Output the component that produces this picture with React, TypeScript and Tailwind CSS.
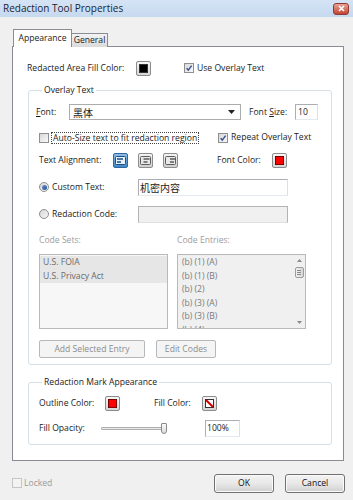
import type { ReactNode } from 'react';

const cjk = "font-['Noto_Sans_CJK_SC',sans-serif]";

function Check({ checked, disabled }: { checked?: boolean; disabled?: boolean }) {
  return (
    <span
      className={`flex h-[10px] w-[10px] shrink-0 items-center justify-center border ${
        disabled ? 'border-[#c6c6c6] bg-[#f3f3f3]' : 'border-[#8e8f8f] bg-gradient-to-br from-[#d8d8d8] to-[#fafafa]'
      }`}
    >
      {checked && (
        <svg width="8" height="8" viewBox="0 0 8 8">
          <path d="M1.6 4.3 L3.3 6.1 L6.6 1.6" fill="none" stroke="#3a4f8a" strokeWidth="1.4" />
        </svg>
      )}
    </span>
  );
}

function Radio({ checked }: { checked?: boolean }) {
  return (
    <span className="flex h-[10px] w-[10px] shrink-0 items-center justify-center rounded-full border border-[#8e8f8f] bg-gradient-to-br from-[#d6d6d6] to-[#f7f7f7]">
      {checked && <span className="h-[5px] w-[5px] rounded-full bg-gradient-to-br from-[#6a93cf] to-[#1f4d94]" />}
    </span>
  );
}

function Swatch({ children }: { children: ReactNode }) {
  return (
    <span className="flex h-[15px] w-[15px] shrink-0 items-center justify-center rounded-[2px] border border-[#8b8b8b] bg-gradient-to-b from-[#f7f7f7] to-[#d6d6d6]">
      {children}
    </span>
  );
}

function AlignButton({ active, kind }: { active?: boolean; kind: 'left' | 'center' | 'right' }) {
  const line = active ? '#1d4f82' : '#5c5c5c';
  const inner = active ? '#e4f1fb' : '#e9e9e9';
  const x = kind === 'left' ? 3.5 : kind === 'center' ? 5 : 6.5;
  return (
    <span
      className={`flex h-[15px] w-[15px] shrink-0 items-center justify-center rounded-[2px] border ${
        active ? 'border-[#2c6aa0] bg-gradient-to-b from-[#8fbce6] to-[#3f86c6]' : 'border-[#8d8d8d] bg-gradient-to-b from-[#f4f4f4] to-[#cfcfcf]'
      }`}
    >
      <svg width="11" height="9" viewBox="0 0 11 9">
        <rect x="0.5" y="0.5" width="10" height="8" rx="1" fill={inner} stroke={line} strokeWidth="1" />
        <path d={`M${x - 1.5} 3 H${x + 4.5} M${x - 1.5} 6 H${x + 2.5}`} stroke={line} strokeWidth="1.3" />
      </svg>
    </span>
  );
}

function WinButton({ children, className = '' }: { children: ReactNode; className?: string }) {
  return (
    <span
      className={`flex h-[19px] items-center justify-center rounded-[3px] border border-[#707070] bg-gradient-to-b from-[#f3f3f3] via-[#e8e8e8] to-[#d0d0d0] text-[#111] shadow-[inset_0_0_0_1px_#fbfbfb] ${className}`}
    >
      {children}
    </span>
  );
}

function DisabledButton({ children, className = '' }: { children: ReactNode; className?: string }) {
  return (
    <span
      className={`flex h-[18px] items-center justify-center rounded-[2px] border border-[#b5b9bc] bg-[#f4f4f4] text-[#8c8c8c] ${className}`}
    >
      {children}
    </span>
  );
}

const entries = ['(b) (1) (A)', '(b) (1) (B)', '(b) (2)', '(b) (3) (A)', '(b) (3) (B)', '(b) (4)'];

export default function App() {
  return (
    <div className="flex h-[500px] w-[353px] flex-col overflow-hidden bg-[#f0f0f0] font-['Open_Sans',sans-serif] text-[8.6px] text-[#1b1b1b]">
      {/* title bar */}
      <div className="flex h-[17px] shrink-0 items-center justify-between bg-gradient-to-b from-[#d5e4f5] to-[#c6d9ef] pl-[3px] pr-[4px]">
        <span className="text-[10px] text-[#1a2431]">Redaction Tool Properties</span>
        <span className="flex h-[12px] w-[16px] items-center justify-center rounded-[3px] border border-[#8e3b31] bg-gradient-to-b from-[#e9a195] to-[#c3412f]">
          <svg width="7" height="7" viewBox="0 0 7 7">
            <path d="M1 1 L6 6 M6 1 L1 6" stroke="#fff" strokeWidth="1.6" />
          </svg>
        </span>
      </div>

      <div className="pl-[12px] pt-[12px]">
        {/* tabs */}
        <div className="relative z-10 -mb-px flex h-[18px] items-end">
          <span className="ml-[1px] flex h-[18px] w-[59px] items-center justify-center border border-b-0 border-[#898c95] bg-white">
            Appearance
          </span>
          <span className="flex h-[14px] w-[36px] items-center justify-center border border-b-0 border-l-0 border-[#898c95] bg-gradient-to-b from-[#f3f3f3] to-[#dadada]">
            General
          </span>
        </div>

        {/* panel */}
        <div className="h-[415px] w-[332px] border border-[#898c95] bg-white pl-[14px] pt-[14px]">
          <div className="flex h-[15px] items-center">
            <span className="w-[109px]">Redacted Area Fill Color:</span>
            <Swatch>
              <span className="h-[9px] w-[9px] border border-[#333] bg-black" />
            </Swatch>
            <span className="ml-[33px] flex items-center gap-[3px]">
              <Check checked />
              Use Overlay Text
            </span>
          </div>

          <fieldset className="ml-[1px] mt-[8px] w-[304px] rounded-[3px] border border-[#d5dfe5] pb-[6px] pl-[10px]">
            <legend className="ml-[3px] px-[2px] leading-[12px]">Overlay Text</legend>

            <div className="-ml-[3px] mt-[8px] flex h-[16px] items-center">
              <span className="w-[33px]">
                <span className="underline">F</span>ont:
              </span>
              <span className="flex h-[16px] w-[172px] items-center justify-between border border-[#acacac] bg-white pl-[3px] pr-[5px]">
                <span className={`${cjk} text-[10px]`}>黑体</span>
                <svg width="7" height="4" viewBox="0 0 7 4">
                  <path d="M0 0 H7 L3.5 4 Z" fill="#222" />
                </svg>
              </span>
              <span className="ml-[8px] w-[46px]">
                Font <span className="underline">S</span>ize:
              </span>
              <span className="flex h-[16px] w-[23px] items-center border border-[#abadb3] border-b-[#e3e9ef] border-r-[#dbdfe6] bg-white pl-[2px]">
                10
              </span>
            </div>

            <div className="mt-[12px] flex h-[11px] items-center">
              <span className="flex w-[179px] items-center">
                <Check />
                <span className="ml-[2px] border border-dotted border-[#444] px-[1px] leading-[10px]">
                  Auto-Size text to fit redaction region
                </span>
              </span>
              <Check checked />
              <span className="ml-[3px]">Repeat Overlay Text</span>
            </div>

            <div className="mt-[10px] flex h-[15px] items-center">
              <span className="w-[74px]">Text Alignment:</span>
              <span className="flex gap-[10px]">
                <AlignButton active kind="left" />
                <AlignButton kind="center" />
                <AlignButton kind="right" />
              </span>
              <span className="ml-[39px] w-[55px]">Font Color:</span>
              <Swatch>
                <span className="h-[9px] w-[9px] border border-[#7a0000] bg-[#ff0000]" />
              </Swatch>
            </div>

            <div className="mt-[11px] flex h-[17px] items-center">
              <span className="flex w-[99px] items-center gap-[3px]">
                <Radio checked />
                Custom Text:
              </span>
              <span className={`flex h-[17px] w-[150px] items-center border border-[#abadb3] border-b-[#e3e9ef] border-r-[#dbdfe6] bg-white pl-[1px] text-[10px] ${cjk}`}>
                机密内容
              </span>
            </div>

            <div className="mt-[10px] flex h-[17px] items-center">
              <span className="flex w-[99px] items-center gap-[3px]">
                <Radio />
                Redaction Code:
              </span>
              <span className="h-[17px] w-[150px] border border-[#b4b4b4] border-b-[#e0e0e0] bg-[#f0f0f0]" />
            </div>

            <div className="mt-[11px] flex h-[12px] items-center text-[#9c9c9c]">
              <span className="w-[138px]">Code Sets:</span>
              <span>Code Entries:</span>
            </div>

            <div className="mt-[8px] flex h-[75px]">
              <div className="w-[129px] border border-[#b9b9b9] bg-[#f7f7f7] pt-[1px] leading-[13.6px] text-[#6a6a6a]">
                <div className="bg-[#e6e6e6] pl-[3px]">U.S. FOIA</div>
                <div className="bg-[#e6e6e6] pl-[3px]">U.S. Privacy Act</div>
              </div>
              <div className="ml-[9px] flex w-[129px] overflow-hidden border border-[#b9b9b9] bg-[#f0f0f0] text-[#7a7a7a]">
                <div className="flex-1 pl-[4px] pt-[1px] leading-[13.6px]">
                  {entries.map((e) => (
                    <div key={e}>{e}</div>
                  ))}
                </div>
                <div className="flex w-[12px] flex-col items-center pt-[4px]">
                  <svg width="5" height="3" viewBox="0 0 5 3">
                    <path d="M0 3 L2.5 0 L5 3 Z" fill="#8a8a8a" />
                  </svg>
                  <span className="mt-[5px] flex h-[11px] w-[9px] flex-col items-center justify-center gap-[1px] rounded-[2px] border border-[#9d9d9d] bg-gradient-to-r from-[#f2f2f2] to-[#d6d6d6]">
                    <span className="h-px w-[4px] bg-[#8a8a8a]" />
                    <span className="h-px w-[4px] bg-[#8a8a8a]" />
                    <span className="h-px w-[4px] bg-[#8a8a8a]" />
                  </span>
                  <svg className="mt-auto mb-[4px]" width="5" height="3" viewBox="0 0 5 3">
                    <path d="M0 0 L2.5 3 L5 0 Z" fill="#8a8a8a" />
                  </svg>
                </div>
              </div>
            </div>

            <div className="mt-[11px] flex">
              <DisabledButton className="w-[106px]">Add Selected Entry</DisabledButton>
              <DisabledButton className="ml-[11px] w-[60px]">Edit Codes</DisabledButton>
            </div>
          </fieldset>

          <fieldset className="ml-[1px] mt-[11px] w-[304px] rounded-[3px] border border-[#d5dfe5] pb-[7px] pl-[10px]">
            <legend className="ml-[3px] px-[2px] leading-[12px]">Redaction Mark Appearance</legend>

            <div className="mt-[8px] flex h-[15px] items-center">
              <span className="w-[66px]">Outline Color:</span>
              <Swatch>
                <span className="h-[9px] w-[9px] border border-[#7a0000] bg-[#ff0000]" />
              </Swatch>
              <span className="ml-[34px] w-[48px]">Fill Color:</span>
              <Swatch>
                <svg width="9" height="9" viewBox="0 0 9 9">
                  <rect x="0.5" y="0.5" width="8" height="8" fill="#fff" stroke="#333" />
                  <path d="M0 0 H3 L0 3 Z" fill="#222" />
                  <path d="M1 1 L8 8" stroke="#d00000" strokeWidth="2" />
                </svg>
              </Swatch>
            </div>

            <div className="mt-[9px] flex h-[17px] items-center">
              <span className="w-[62px]">Fill Opacity:</span>
              <span className="relative flex h-[12px] w-[66px] items-center">
                <span className="h-[3px] w-[62px] rounded-[1px] border border-[#b0b0b0] bg-[#e7e7e7]" />
                <span className="absolute right-0 top-0 h-[11px] w-[6px] rounded-b-[3px] rounded-t-[1px] border border-[#8a8a8a] bg-gradient-to-b from-[#fafafa] to-[#dcdcdc]" />
              </span>
              <span className="ml-[38px] flex h-[17px] w-[35px] items-center border border-[#abadb3] border-b-[#e3e9ef] border-r-[#dbdfe6] bg-white pl-[1px]">
                100%
              </span>
            </div>
          </fieldset>
        </div>
      </div>

      {/* footer */}
      <div className="mt-[13px] flex h-[19px] items-center pl-[12px] pr-[8px]">
        <span className="flex items-center gap-[2px] text-[#9a9a9a]">
          <Check disabled />
          Locked
        </span>
        <WinButton className="ml-auto w-[60px]">OK</WinButton>
        <WinButton className="ml-[11px] w-[60px]">Cancel</WinButton>
      </div>
    </div>
  );
}
